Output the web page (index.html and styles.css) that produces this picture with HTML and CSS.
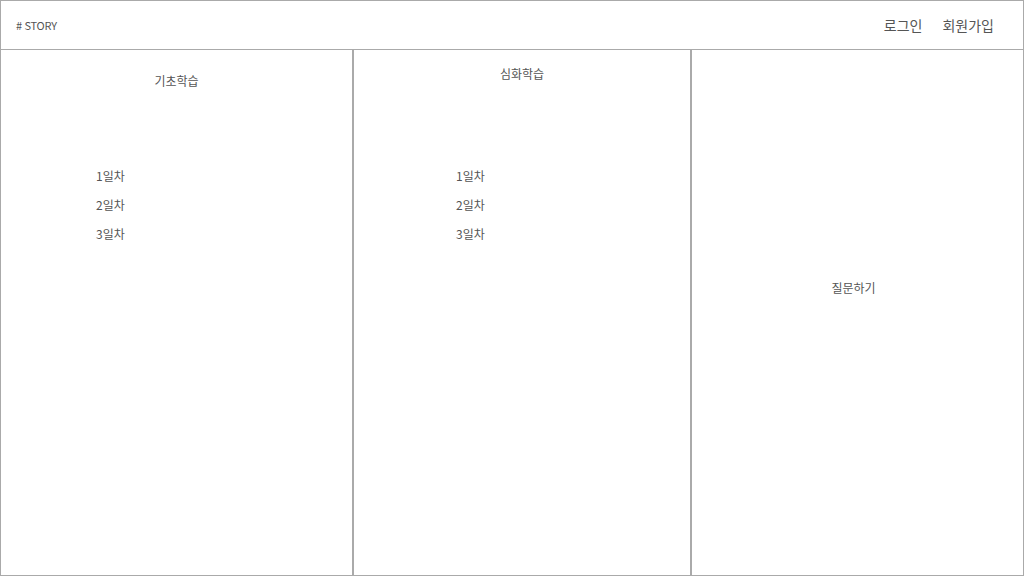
FILE: index.html
```html
<!DOCTYPE html>
<html lang="ko">
<head>
    <meta charset="UTF-8">
    <meta name="viewport" content="width=device-width, initial-scale=1.0">
    <title>STORY</title>
    <link rel="stylesheet" href="styles.css">
</head>
<body>
    <header class="top">
        <div class="logo"># STORY</div>
        <nav class="menu">
            <a href="#">로그인</a>
            <a href="#">회원가입</a>
        </nav>
    </header>
    <main class="board">
        <section class="col basic">
            <h2 class="title">기초학습</h2>
            <ul class="days">
                <li>1일차</li>
                <li>2일차</li>
                <li>3일차</li>
            </ul>
        </section>
        <section class="col deep">
            <h2 class="title">심화학습</h2>
            <ul class="days">
                <li>1일차</li>
                <li>2일차</li>
                <li>3일차</li>
            </ul>
        </section>
        <section class="col ask">
            <h2 class="title">질문하기</h2>
        </section>
    </main>
</body>
</html>
```

FILE: styles.css
```css
* {
    margin: 0;
    padding: 0;
    box-sizing: border-box;
}

body {
    font-family: "Noto Sans CJK KR", "Noto Sans", sans-serif;
    color: #555;
    background-color: #fff;
}

/* header */
.top {
    height: 50px;
    border: 1px solid #aaa;
    display: flex;
    align-items: center;
    justify-content: space-between;
    padding: 0 29px 0 15px;
}
.logo {
    font-size: 11px;
    letter-spacing: -0.3px;
}
.menu {
    display: flex;
    gap: 20px;
}
.menu a {
    color: #555;
    text-decoration: none;
    font-size: 14px;
}

/* columns */
.board {
    display: flex;
    height: 526px;
}
.col {
    border: 1px solid #aaa;
    border-top: none;
}
.basic {
    width: 353px;
    padding-top: 22px;
}
.deep {
    width: 338px;
    padding-top: 15px;
}
.ask {
    width: 333px;
    padding-top: 229px;
    padding-right: 8px;
}
.title {
    font-size: 12px;
    font-weight: normal;
    text-align: center;
    line-height: 18px;
}
.days {
    list-style: none;
    font-size: 12px;
    line-height: 18px;
    display: flex;
    flex-direction: column;
    gap: 11px;
}
.basic .days {
    margin-top: 77px;
    padding-left: 95px;
}
.deep .days {
    margin-top: 84px;
    padding-left: 102px;
}
```
